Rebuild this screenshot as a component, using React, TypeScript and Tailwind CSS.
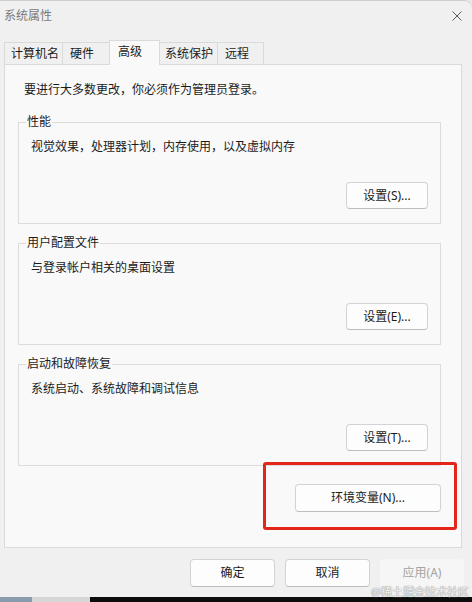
import React from 'react';

const font = "font-['Noto_Sans','Noto_Sans_CJK_SC',sans-serif]";

const tabs = [
    { label: '计算机名', w: 'w-[59px]', pl: 'pl-[6px]' },
    { label: '硬件', w: 'w-[47px]', pl: 'pl-[7px]' },
    { label: '高级', w: 'w-[51px]', pl: 'pl-[8px]', active: true },
    { label: '系统保护', w: 'w-[58px]', pl: 'pl-[5px]' },
    { label: '远程', w: 'w-[46px]', pl: 'pl-[7px]' },
];

const groups = [
    { title: '性能', desc: '视觉效果，处理器计划，内存使用，以及虚拟内存', btn: '设置(S)...' },
    { title: '用户配置文件', desc: '与登录帐户相关的桌面设置', btn: '设置(E)...' },
    { title: '启动和故障恢复', desc: '系统启动、系统故障和调试信息', btn: '设置(T)...' },
];

function WinButton({ children, className = '' }: { children: React.ReactNode; className?: string }) {
    return (
        <button
            className={`flex items-center justify-center rounded-[4px] border border-[#d3d3d3] border-b-[#bdbdbd] bg-[#fdfdfd] text-[12px] leading-[16px] text-[#1b1b1b] ${className}`}
        >
            {children}
        </button>
    );
}

export default function App() {
    return (
        <div className={`relative h-[602px] w-[472px] overflow-hidden bg-[#e9e9e9] ${font}`}>
            {/* ─── Window ─────────────────────────────────────────── */}
            <div className="relative flex h-[597px] flex-col rounded-tr-[8px] border-t border-[#cfcfcf] bg-[#f0f0f0]">
                {/* title bar */}
                <div className="flex h-[30px] items-center justify-between pl-[4px] pr-[10px]">
                    <span className="text-[12px] leading-[16px] text-[#7b7b7b]">系统属性</span>
                    <svg width="10" height="10" viewBox="0 0 10 10" className="text-[#5c5c5c]">
                        <path d="M0.5 0.5L9.5 9.5M9.5 0.5L0.5 9.5" stroke="currentColor" strokeWidth="1" />
                    </svg>
                </div>

                {/* tabs */}
                <div className="ml-[4px] mt-[9px] flex h-[24px] items-end">
                    {tabs.map((t, i) =>
                        t.active ? (
                            <div
                                key={t.label}
                                className={`relative z-10 -mb-px -ml-px flex h-[25px] items-center border-x border-t border-[#dadada] bg-[#f9f9f9] pb-[3px] text-[12px] text-[#1b1b1b] ${t.w} ${t.pl}`}
                            >
                                {t.label}
                            </div>
                        ) : (
                            <div
                                key={t.label}
                                className={`flex h-[22px] items-center border-r border-t border-[#dadada] bg-[#f0f0f0] text-[12px] text-[#1b1b1b] ${i === 0 ? 'border-l' : ''} ${t.w} ${t.pl}`}
                            >
                                {t.label}
                            </div>
                        ),
                    )}
                </div>

                {/* panel */}
                <div className="ml-[4px] mr-[10px] flex h-[484px] flex-col border border-[#dadada] bg-[#f9f9f9] pl-[13px] pr-[20px] pt-[17px]">
                    <p className="ml-[6px] text-[12px] leading-[16px] text-[#1b1b1b]">
                        要进行大多数更改，你必须作为管理员登录。
                    </p>

                    <div className="mt-[16px] flex flex-col gap-[11px]">
                        {groups.map((g) => (
                            <fieldset key={g.title} className="border border-[#dcdcdc] pb-[14px] pl-[7px] pr-[12px]">
                                <legend className="px-[1px] text-[12px] leading-[16px] text-[#1b1b1b]">{g.title}</legend>
                                <p className="ml-[5px] mt-[9px] text-[12px] leading-[16px] text-[#1b1b1b]">{g.desc}</p>
                                <div className="mt-[27px] flex justify-end">
                                    <WinButton className="h-[27px] w-[82px]">{g.btn}</WinButton>
                                </div>
                            </fieldset>
                        ))}
                    </div>

                    <div className="mt-[18px] flex justify-end">
                        <WinButton className="h-[28px] w-[146px]">环境变量(N)...</WinButton>
                    </div>
                </div>

                {/* dialog buttons */}
                <div className="mt-[11px] flex justify-end gap-[10px] pr-[8px]">
                    <WinButton className="h-[28px] w-[85px]">确定</WinButton>
                    <WinButton className="h-[28px] w-[85px]">取消</WinButton>
                    <button className="flex h-[28px] w-[84px] items-center justify-center rounded-[4px] bg-[#f6f6f6] text-[12px] text-[#a3a3a3]">
                        应用(A)
                    </button>
                </div>

                {/* red annotation box */}
                <div className="absolute left-[263px] top-[461px] h-[68px] w-[194px] rounded-[3px] border-[3px] border-[#e3261c]" />
            </div>

            {/* taskbar strip */}
            <div className="flex h-[5px]">
                <div className="w-[32px] bg-[#8a9bae]" />
                <div className="w-[58px] bg-[#d6d6d6]" />
                <div className="flex-1 bg-[#0c0c0c]" />
            </div>

            {/* watermark */}
            <span className="absolute bottom-[4px] right-[3px] text-[11px] leading-[12px] text-[#f2f2f2] [text-shadow:0_0_1px_#8f8f8f,0_0_1px_#8f8f8f]">
                @稀土掘金技术社区
            </span>
        </div>
    );
}
